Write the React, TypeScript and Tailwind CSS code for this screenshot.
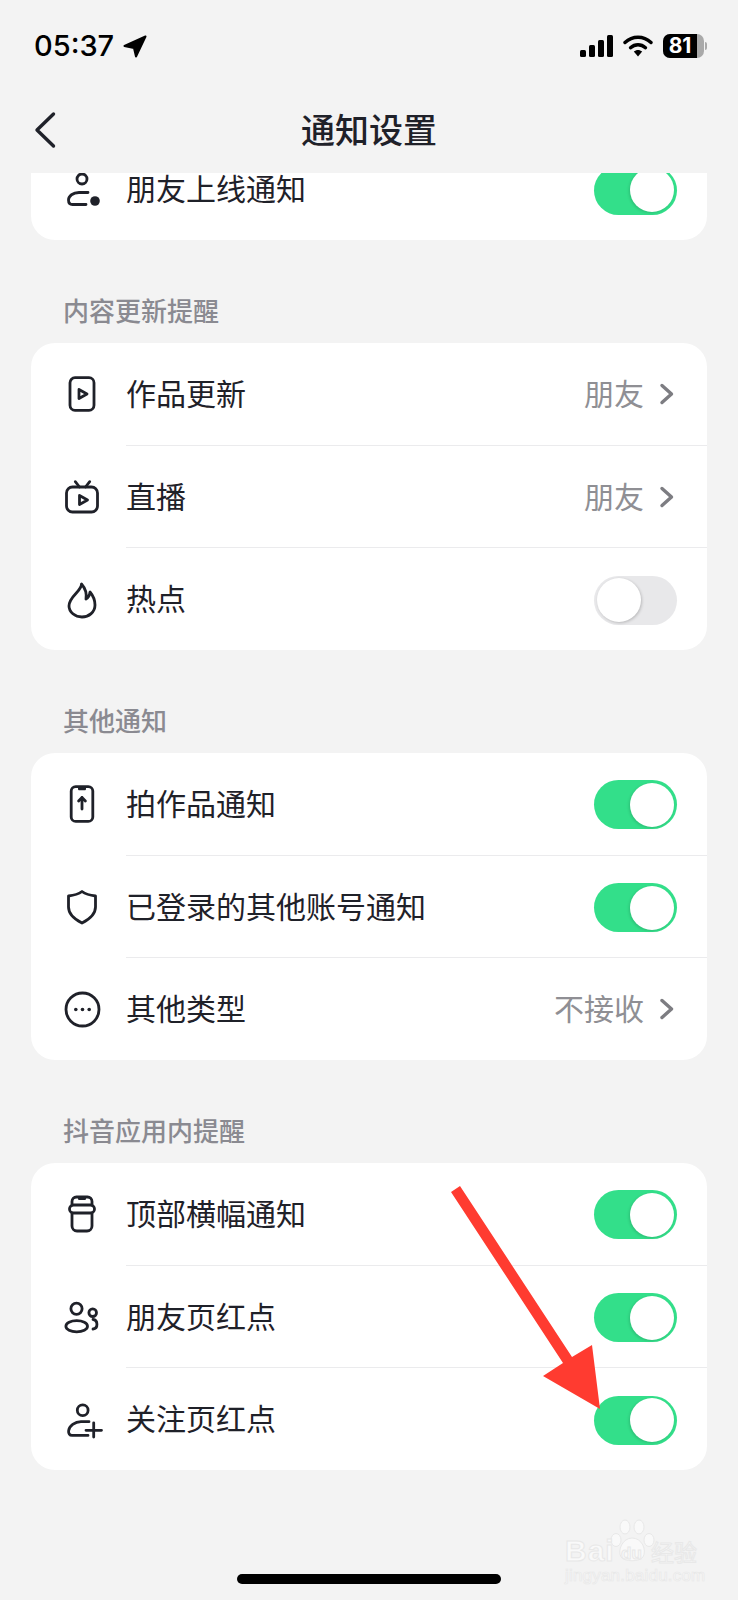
import React from 'react';

type RowData = {
  icon: React.ReactNode;
  label: string;
  value?: string;
  toggle?: boolean;
};

const Ico: React.FC<{ children: React.ReactNode }> = ({ children }) => (
  <svg
    width="40"
    height="40"
    viewBox="0 0 40 40"
    fill="none"
    stroke="#1f2129"
    strokeWidth="2.8"
    strokeLinecap="round"
    strokeLinejoin="round"
    className="shrink-0 overflow-visible"
  >
    {children}
  </svg>
);

const icons = {
  online: (
    <Ico>
      <circle cx="20" cy="10" r="5" />
      <path d="M26 23.5H17C11 23.5 6.5 27 6.5 31C6.5 34 8 35.5 10.5 35.5H24" />
      <circle cx="33" cy="32" r="4.8" fill="#1f2129" stroke="none" />
    </Ico>
  ),
  video: (
    <Ico>
      <rect x="8" y="3.7" width="24" height="32.6" rx="5" />
      <path d="M17 15.5L25 20L17 24.5Z" />
    </Ico>
  ),
  tv: (
    <Ico>
      <rect x="4.5" y="10" width="31" height="25" rx="6" />
      <path d="M13.3 4.7L17.5 10M27.7 4.7L23.5 10" />
      <path d="M17.5 18.5L25.5 23L17.5 27.5Z" />
    </Ico>
  ),
  flame: (
    <Ico>
      <path d="M19.5 5C20 12 7 17 7 27C7 33 13 38 20 38C27 38 33 33 33 26C33 21 30.5 16 28 13C27.5 17 26 19 24 20C25 14 23 9 19.5 5Z" />
    </Ico>
  ),
  phone: (
    <Ico>
      <rect x="9.2" y="2.6" width="21.6" height="34.8" rx="4.5" />
      <path d="M16 3H24V5C24 6 23.4 6.2 22.6 6.2H17.4C16.6 6.2 16 6 16 5Z" fill="#1f2129" stroke="none" />
      <path d="M20 25V13.5M16.6 17L20 13.5L23.4 17" />
    </Ico>
  ),
  shield: (
    <Ico>
      <path d="M20 4.5C24 7.5 29 8.5 33.5 9V20C33.5 28 26 33 20 36C14 33 6.5 28 6.5 20V9C11 8.5 16 7.5 20 4.5Z" />
    </Ico>
  ),
  more: (
    <Ico>
      <circle cx="20.5" cy="20.5" r="16.5" />
      <circle cx="13.8" cy="20.5" r="1.8" fill="#1f2129" stroke="none" />
      <circle cx="20.5" cy="20.5" r="1.8" fill="#1f2129" stroke="none" />
      <circle cx="27.2" cy="20.5" r="1.8" fill="#1f2129" stroke="none" />
    </Ico>
  ),
  banner: (
    <Ico>
      <rect x="7.5" y="11" width="25" height="8" rx="4" />
      <path d="M10 19V32A5 5 0 0 0 15 37H25A5 5 0 0 0 30 32V19" />
      <path d="M10 11V7.5A4.5 4.5 0 0 1 14.5 3H25.5A4.5 4.5 0 0 1 30 7.5V11" />
      <path d="M16 3H24V4.5C24 5.5 23.4 6 22.6 6H17.4C16.6 6 16 5.5 16 4.5Z" fill="#1f2129" stroke="none" />
    </Ico>
  ),
  friends: (
    <Ico>
      <circle cx="14.5" cy="11.7" r="5.6" />
      <ellipse cx="14.7" cy="29.2" rx="10.8" ry="5.6" />
      <circle cx="30.7" cy="15.7" r="3.8" />
      <path d="M31 22.5C36 23 36.5 31.5 31 32" />
    </Ico>
  ),
  follow: (
    <Ico>
      <circle cx="20.7" cy="11.3" r="5.4" />
      <path d="M27 22.7H19C13 22.7 7 27 6.6 32C6.4 34.5 7.6 36.4 10 36.4H26" />
      <path d="M24 31.3H39.5M31.7 23.8V38" />
    </Ico>
  ),
};

const Toggle: React.FC<{ on: boolean }> = ({ on }) => (
  <div
    className={
      on
        ? 'mt-[2px] w-[83px] h-[49px] rounded-full bg-[#33df8a] flex items-center justify-end pr-[3px]'
        : 'mt-[2px] w-[83px] h-[49px] rounded-full bg-[#e8e8ea] flex items-center justify-start pl-[3px]'
    }
  >
    <div
      className={
        on
          ? 'w-[44px] h-[44px] rounded-full bg-white shadow-[-1px_1px_3px_rgba(0,0,0,0.15)]'
          : 'w-[44px] h-[44px] rounded-full bg-white shadow-[1px_1px_3px_rgba(0,0,0,0.2)]'
      }
    />
  </div>
);

const Row: React.FC<RowData> = ({ icon, label, value, toggle }) => (
  <div className="flex-1 min-h-0 flex items-center pl-[31px] pr-[30px]">
    {icon}
    <span className="ml-[24px] -mt-[4px] flex-1 text-[30px] leading-[40px] text-[#1f2129]">{label}</span>
    {value !== undefined && (
      <div className="flex items-center">
        <span className="-mt-[4px] text-[30px] leading-[40px] text-[#8f8f94]">{value}</span>
        <svg width="18" height="24" viewBox="0 0 18 24" fill="none" className="ml-[14px] mr-[1px]">
          <path d="M4 3.5L13.5 12L4 20.5" stroke="#7d7d82" strokeWidth="3.4" strokeLinecap="round" strokeLinejoin="round" />
        </svg>
      </div>
    )}
    {toggle !== undefined && <Toggle on={toggle} />}
  </div>
);

const Card: React.FC<{ rows: RowData[] }> = ({ rows }) => (
  <div className="mx-[31px] h-[307px] bg-white rounded-[24px] flex flex-col">
    {rows.map((row, i) => (
      <React.Fragment key={row.label}>
        {i > 0 && <div className="ml-[95px] h-px bg-[#ebebed] shrink-0" />}
        <Row {...row} />
      </React.Fragment>
    ))}
  </div>
);

const SectionTitle: React.FC<{ title: string }> = ({ title }) => (
  <div className="h-[103px] pl-[63px] pt-[55px] text-[26px] leading-[30px] font-medium text-[#8a8a91]">{title}</div>
);

const sections: { title: string; rows: RowData[] }[] = [
  {
    title: '内容更新提醒',
    rows: [
      { icon: icons.video, label: '作品更新', value: '朋友' },
      { icon: icons.tv, label: '直播', value: '朋友' },
      { icon: icons.flame, label: '热点', toggle: false },
    ],
  },
  {
    title: '其他通知',
    rows: [
      { icon: icons.phone, label: '拍作品通知', toggle: true },
      { icon: icons.shield, label: '已登录的其他账号通知', toggle: true },
      { icon: icons.more, label: '其他类型', value: '不接收' },
    ],
  },
  {
    title: '抖音应用内提醒',
    rows: [
      { icon: icons.banner, label: '顶部横幅通知', toggle: true },
      { icon: icons.friends, label: '朋友页红点', toggle: true },
      { icon: icons.follow, label: '关注页红点', toggle: true },
    ],
  },
];

const StatusBar: React.FC = () => (
  <div className="h-[91px] pt-[31px] pl-[34px] pr-[31px] flex items-start justify-between font-['Inter',sans-serif]">
    <div className="flex items-center h-[30px]">
      <span className="text-[29px] leading-[30px] font-medium text-black">05:37</span>
      <svg width="24" height="23" viewBox="0 0 24 23" className="ml-[9px]">
        <path d="M22.5 1.5L1.5 11L11 13L13 21.5Z" fill="#000" stroke="#000" strokeWidth="2" strokeLinejoin="round" />
      </svg>
    </div>
    <div className="flex items-center h-[30px]">
      <svg width="33" height="22" viewBox="0 0 33 22">
        <rect x="0" y="15" width="6" height="7" rx="1.5" fill="#000" />
        <rect x="9" y="10" width="6" height="12" rx="1.5" fill="#000" />
        <rect x="18" y="5" width="6" height="17" rx="1.5" fill="#000" />
        <rect x="27" y="0" width="6" height="22" rx="1.5" fill="#000" />
      </svg>
      <svg width="30" height="22" viewBox="0 0 30 22" fill="none" className="ml-[10px]">
        <path d="M2 7.5C9.5 0.5 20.5 0.5 28 7.5" stroke="#000" strokeWidth="3.4" strokeLinecap="round" />
        <path d="M7.5 12.7C12 8.7 18 8.7 22.5 12.7" stroke="#000" strokeWidth="3.4" strokeLinecap="round" />
        <path d="M10.8 16.6C13.4 14.4 16.6 14.4 19.2 16.6L15 21.5Z" fill="#000" />
      </svg>
      <div className="ml-[10px] flex items-center">
        <div className="relative w-[41px] h-[24px] rounded-[7px] bg-[#a9a9a9] overflow-hidden">
          <div className="h-full w-[34px] bg-black flex items-center justify-center text-[21px] leading-[24px] font-bold text-white">
            81
          </div>
        </div>
        <div className="w-[2px] h-[8px] rounded-r-full bg-[#a9a9a9] ml-px" />
      </div>
    </div>
  </div>
);

const NavBar: React.FC = () => (
  <div className="relative h-[82px] flex items-center justify-center">
    <svg width="24" height="38" viewBox="0 0 24 38" fill="none" className="absolute left-[33px] top-[20px]">
      <path d="M20.5 3L4 19L20.5 35" stroke="#1f2129" strokeWidth="3.4" strokeLinecap="round" strokeLinejoin="round" />
    </svg>
    <span className="-mt-[7px] text-[34px] leading-[44px] font-medium text-[#1f2129]">通知设置</span>
  </div>
);

export default function App() {
  return (
    <div className="relative w-[738px] h-[1600px] overflow-hidden bg-[#f3f3f3] font-['Noto_Sans_CJK_SC','Noto_Sans',sans-serif]">
      <StatusBar />
      <NavBar />

      {/* Scrolled list: the first card is cut off by the nav bar */}
      <div className="h-[1427px] overflow-hidden">
        <div className="mx-[31px] h-[67px] bg-white rounded-b-[24px] flex flex-col justify-end">
          <div className="h-[102px] shrink-0 flex items-center pl-[31px] pr-[30px]">
            {icons.online}
            <span className="ml-[24px] -mt-[4px] flex-1 text-[30px] leading-[26px] text-[#1f2129]">朋友上线通知</span>
            <Toggle on={true} />
          </div>
        </div>
        {sections.map(section => (
          <div key={section.title}>
            <SectionTitle title={section.title} />
            <Card rows={section.rows} />
          </div>
        ))}
      </div>

      {/* Home indicator */}
      <div className="absolute left-[237px] top-[1574px] w-[264px] h-[10px] rounded-full bg-black" />

      {/* Red annotation arrow */}
      <svg width="738" height="1600" viewBox="0 0 738 1600" className="absolute left-0 top-0 pointer-events-none">
        <polygon
          points="451,1192 460,1186 572,1357 592,1345 600,1409 543,1376 563,1363"
          fill="#ff3b30"
        />
      </svg>

      {/* Baidu watermark */}
      <div className="absolute left-[565px] top-[1518px] w-[135px] h-[68px] text-white pointer-events-none font-['Liberation_Sans',sans-serif]">
        <svg width="60" height="44" viewBox="0 0 60 44" className="absolute left-[44px] top-0">
          <g fill="#f9f9f9" stroke="#e8e8e8" strokeWidth="1">
            <ellipse cx="16" cy="9" rx="5" ry="7" />
            <ellipse cx="30" cy="9" rx="5" ry="7" />
            <ellipse cx="40" cy="22" rx="5" ry="6.5" />
            <ellipse cx="7" cy="22" rx="5" ry="6.5" />
            <path d="M23 20C33 20 38 32 34 39C30 44 16 44 12 39C8 32 14 20 23 20Z" />
          </g>
        </svg>
        <span className="absolute left-0 top-[16px] text-[30px] leading-[34px] font-bold tracking-[1px] text-[#f9f9f9] [-webkit-text-stroke:1px_#e8e8e8]">Bai</span>
        <span className="absolute left-[56px] top-[26px] text-[17px] leading-[20px] font-bold text-[#f9f9f9] [-webkit-text-stroke:1px_#e8e8e8]">du</span>
        <span className="absolute left-[86px] top-[20px] text-[23px] leading-[26px] text-[#f9f9f9] font-['Noto_Sans_CJK_SC',sans-serif] [-webkit-text-stroke:1px_#e8e8e8]">经验</span>
        <span className="absolute left-0 top-[49px] text-[17px] leading-[18px] tracking-[0.2px] whitespace-nowrap text-[#f9f9f9] [-webkit-text-stroke:0.7px_#e8e8e8]">jingyan.baidu.com</span>
      </div>
    </div>
  );
}
